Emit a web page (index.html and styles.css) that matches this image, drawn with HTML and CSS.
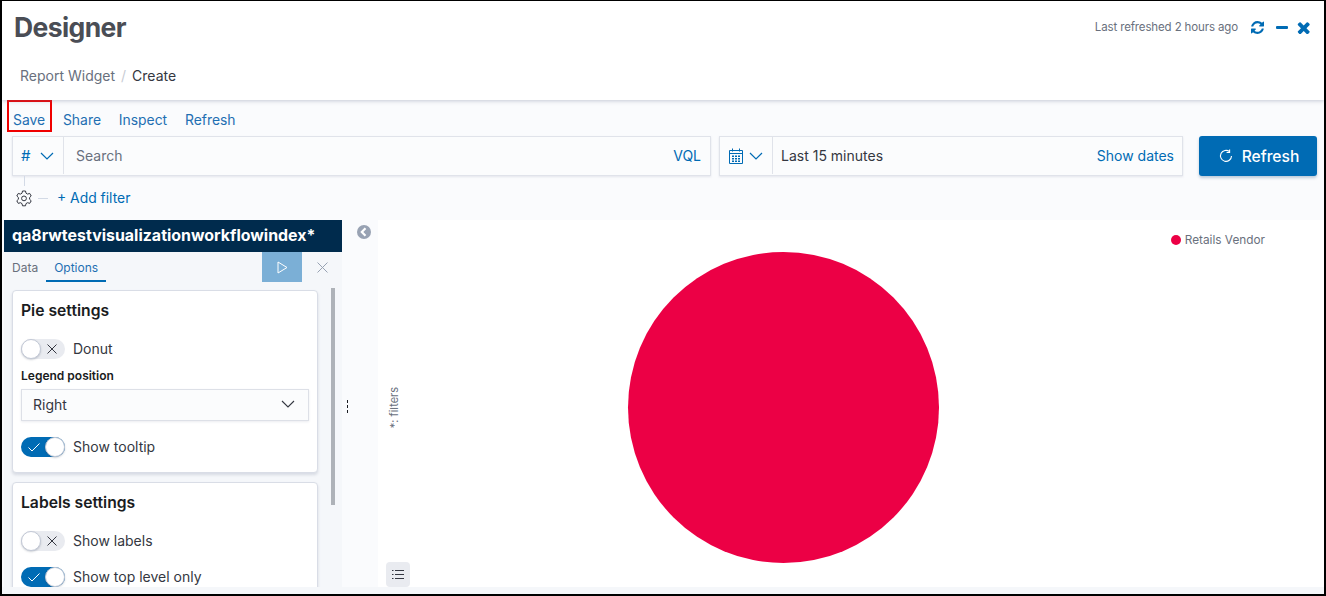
FILE: index.html
```html
<!DOCTYPE html>
<html lang="en">
<head>
  <meta charset="UTF-8">
  <title>Designer</title>
  <link rel="stylesheet" href="styles.css">
</head>
<body>
<div class="frame">

  <header class="top">
    <div class="title-row">
      <h1>Designer</h1>
      <div class="status">
        <span>Last refreshed 2 hours ago</span>
        <svg class="sync" width="13" height="13" viewBox="128 128 1536 1536"><path d="M1639 1056q0 5-1 7-64 268-268 434.500t-478 166.500q-146 0-282.500-55t-243.500-157l-129 129q-19 19-45 19t-45-19-19-45v-448q0-26 19-45t45-19h448q26 0 45 19t19 45-19 45l-137 137q71 66 161 102t187 36q134 0 250-65t186-179q11-17 53-117 8-23 30-23h192q13 0 22.500 9.500t9.500 22.500zm25-800v448q0 26-19 45t-45 19h-448q-26 0-45-19t-19-45 19-45l138-138q-148-137-349-137-134 0-250 65t-186 179q-11 17-53 117-8 23-30 23h-199q-13 0-22.500-9.500t-9.500-22.500v-7q65-268 270-434.500t480-166.500q146 0 284 55.500t245 156.500l130-129q19-19 45-19t45 19 19 45z" fill="#006bb4"/></svg>
        <span class="minus"></span>
        <svg width="13" height="13" viewBox="250 245 1250 1290"><path d="M1490 1322q0 40-28 68l-136 136q-28 28-68 28t-68-28l-294-294-294 294q-28 28-68 28t-68-28l-136-136q-28-28-28-68t28-68l294-294-294-294q-28-28-28-68t28-68l136-136q28-28 68-28t68 28l294 294 294-294q28-28 68-28t68 28l136 136q28 28 28 68t-28 68l-294 294 294 294q28 28 28 68z" fill="#006bb4"/></svg>
      </div>
    </div>
    <div class="crumbs"><span>Report Widget</span><i>/</i><b>Create</b></div>
  </header>

  <section class="toolbar">
    <nav class="links">
      <a class="save">Save</a><a>Share</a><a>Inspect</a><a>Refresh</a>
    </nav>
    <div class="query-row">
      <div class="search box">
        <div class="prepend"><span class="hash">#</span><svg width="14" height="8" viewBox="0 0 14 8"><path d="M1 1l6 6 6-6" stroke="#006bb4" fill="none" stroke-width="1.2"/></svg></div>
        <span class="placeholder">Search</span>
        <a class="vql">VQL</a>
      </div>
      <div class="dates box">
        <div class="prepend cal">
          <svg width="14" height="16" viewBox="0 0 14 16"><path d="M.5 2.500h13v13H.5zM.5 5.500h13M3.500 .5v3M10.500 .5v3" stroke="#006bb4" fill="none"/><path d="M3 7.500h2V9H3zM6 7.500h2V9H6zM9 7.500h2V9H9zM3 10h2v1.500H3zM6 10h2v1.500H6zM9 10h2v1.500H9zM3 12.500h2V14H3zM6 12.500h2V14H6zM9 12.500h2V14H9z" fill="#006bb4"/></svg>
          <svg width="14" height="8" viewBox="0 0 14 8"><path d="M1 1l6 6 6-6" stroke="#006bb4" fill="none" stroke-width="1.2"/></svg>
        </div>
        <span class="range">Last 15 minutes</span>
        <a class="show">Show dates</a>
      </div>
      <button class="refresh">
        <svg width="14" height="14" viewBox="0 0 14 14"><path d="M10.500 2.600A5.500 5.500 0 1 0 12.500 7" stroke="#fff" fill="none" stroke-width="1.100"/><path d="M10.600 .5v3h-3" stroke="#fff" fill="none" stroke-width="1.100"/></svg>
        Refresh
      </button>
    </div>
    <div class="filter-row">
      <svg width="16" height="17" viewBox="0 0 16 17"><path d="M6.500 1h3l.5 2.200 1.600.9 2.100-.7 1.500 2.600-1.600 1.500v1.800l1.600 1.500-1.500 2.600-2.100-.7-1.600.9-.5 2.200h-3L6 13.600l-1.600-.9-2.100.7L.8 10.800l1.600-1.500V7.500L.8 6l1.500-2.600 2.100.7L6 3.200z" stroke="#343741" stroke-linejoin="round" fill="none"/><circle cx="8" cy="8.400" r="2.400" stroke="#343741" fill="none"/></svg>
      <span class="dash"></span>
      <a>+ Add filter</a>
    </div>
  </section>

  <main class="workspace">
    <aside class="panel">
      <h2 class="index-name">qa8rwtestvisualizationworkflowindex*</h2>
      <div class="tabs">
        <a>Data</a>
        <a class="active">Options</a>
        <button class="run"><svg width="11" height="13" viewBox="0 0 11 13"><path d="M1 1l9 5.500-9 5.500z" stroke="#fff" fill="none"/></svg></button>
        <svg class="discard" width="11" height="11" viewBox="0 0 11 11"><path d="M.5 .5l10 10M10.500 .5l-10 10" stroke="#98a2b3" fill="none"/></svg>
      </div>
      <div class="options">
        <div class="cards">
          <section class="card">
            <h3>Pie settings</h3>
            <div class="switch-row off">
              <span class="switch"><svg width="10" height="10" viewBox="0 0 10 10"><path d="M.5 .5l9 9M9.500 .5l-9 9" stroke="#343741" fill="none"/></svg><span class="knob"></span></span>
              Donut
            </div>
            <label>Legend position</label>
            <div class="select">Right<svg width="14" height="8" viewBox="0 0 14 8"><path d="M1 1l6 6 6-6" stroke="#343741" fill="none" stroke-width="1.100"/></svg></div>
            <div class="switch-row on">
              <span class="switch"><svg width="12" height="9" viewBox="0 0 12 9"><path d="M.5 4.500l3.500 3.500 7.500-7.500" stroke="#fff" fill="none"/></svg><span class="knob"></span></span>
              Show tooltip
            </div>
          </section>
          <section class="card">
            <h3>Labels settings</h3>
            <div class="switch-row off">
              <span class="switch"><svg width="10" height="10" viewBox="0 0 10 10"><path d="M.5 .5l9 9M9.500 .5l-9 9" stroke="#343741" fill="none"/></svg><span class="knob"></span></span>
              Show labels
            </div>
            <div class="switch-row on second">
              <span class="switch"><svg width="12" height="9" viewBox="0 0 12 9"><path d="M.5 4.500l3.500 3.500 7.500-7.500" stroke="#fff" fill="none"/></svg><span class="knob"></span></span>
              Show top level only
            </div>
          </section>
        </div>
        <div class="scrollbar"></div>
      </div>
    </aside>

    <div class="gutter">
      <svg class="collapse" width="14" height="14" viewBox="0 0 14 14"><circle cx="7" cy="7" r="7" fill="#98a2b3"/><path d="M8.500 3.200L4.800 7l3.700 3.800" stroke="#fff" stroke-width="2.200" fill="none"/></svg>
      <span class="dots"></span>
    </div>

    <div class="chart">
      <span class="filters-tag">*: filters</span>
      <div class="pie"></div>
      <div class="legend"><span class="dot"></span>Retails Vendor</div>
      <button class="legend-toggle"><svg width="12" height="11" viewBox="0 0 12 11"><path d="M3 1.500h9M3 5.500h9M3 9.500h9" stroke="#343741"/><path d="M0 1h1.500v1H0zM0 5h1.500v1H0zM0 9h1.500v1H0z" fill="#343741"/></svg></button>
    </div>
  </main>

</div>
</body>
</html>
```

FILE: styles.css
```css
* {
  box-sizing: border-box;
}

html, body {
  margin: 0;
  height: 100%;
  overflow: hidden;
}

body {
  font-family: Inter, sans-serif;
  font-size: 14px;
  color: #343741;
  background: #fff;
}

a {
  color: #006bb4;
}

.frame {
  height: 596px;
  border: 2px solid #000;
  border-top-width: 1px;
  display: flex;
  flex-direction: column;
  overflow: hidden;
}

/* header */
.top {
  height: 99px;
  flex: none;
  position: relative;
  z-index: 1;
  box-shadow: 0 1px 4px rgba(100, 110, 140, 0.35);
  background: #fff;
}

.title-row {
  display: flex;
  justify-content: space-between;
  align-items: flex-start;
  padding: 10px 14px 0 12px;
}

h1 {
  margin: 0;
  font-size: 26.5px;
  letter-spacing: -0.6px;
  line-height: 33px;
  font-weight: 700;
  color: #4a4d55;
}

.status {
  display: flex;
  align-items: center;
  font-size: 11.5px;
  letter-spacing: -0.13px;
  color: #69707d;
  margin-top: 6px;
  height: 20px;
}

.sync {
  margin-left: 13px;
}

.minus {
  width: 12px;
  height: 3px;
  border-radius: 1px;
  background: #006bb4;
  margin: 0 9px 0 12px;
}

.crumbs {
  display: flex;
  align-items: center;
  padding: 22px 0 0 18px;
  font-size: 14px;
  line-height: 20px;
  color: #69707d;
}

.crumbs i {
  font-style: normal;
  color: #c8ccd4;
  margin: 0 6px;
}

.crumbs b {
  font-weight: 400;
  color: #343741;
}

/* toolbar */
.toolbar {
  flex: none;
  height: 120px;
  background: #fafbfd;
  position: relative;
}

.links {
  display: flex;
  height: 31px;
  align-items: flex-end;
  padding: 0 0 0 11px;
  font-size: 13.9px;
}

.links a {
  margin-right: 17.8px;
  line-height: 21px;
  color: #1f6fb2;
}

.links .save {
  position: relative;
}

.links .save::after {
  content: "";
  position: absolute;
  left: -6px;
  right: -7px;
  top: -10px;
  bottom: -1px;
  border: 2px solid #f00000;
}

.query-row {
  display: flex;
  margin: 5px 0 0 10px;
  height: 40px;
}

.box {
  display: flex;
  align-items: center;
  flex: none;
  height: 40px;
  padding-bottom: 1px;
  background: #fbfcfd;
  border: 1px solid #e0e3ea;
  box-shadow: 0 1px 2px rgba(100, 110, 140, 0.15);
}

.prepend {
  display: flex;
  align-items: center;
  height: 100%;
  border-right: 1px solid #e0e3ea;
  flex: none;
}

.search {
  width: 699px;
}

.search .prepend {
  width: 51px;
  padding-left: 8px;
  gap: 9px;
}

.hash {
  font-size: 15px;
  color: #006bb4;
}

.placeholder {
  flex: 1;
  padding-left: 12px;
  color: #69707d;
}

.vql {
  padding-right: 9px;
}

.dates {
  width: 464px;
  margin-left: 8px;
}

.cal {
  width: 53px;
  padding-left: 9px;
  gap: 6px;
}

.range {
  flex: 1;
  padding-left: 8px;
}

.show {
  padding-right: 8px;
}

.refresh {
  width: 118px;
  height: 40px;
  flex: none;
  margin-left: 16px;
  padding: 0 0 0 2px;
  border: 0;
  border-radius: 3px;
  background: #006bb4;
  color: #fff;
  font: 500 15.6px Inter, sans-serif;
  display: flex;
  align-items: center;
  justify-content: center;
  gap: 9px;
  box-shadow: 0 2px 3px rgba(0, 60, 110, 0.25);
}

.filter-row {
  display: flex;
  align-items: center;
  height: 22px;
  margin: 11px 0 0 14px;
  position: relative;
  font-size: 13.9px;
}

.filter-row a {
  padding-bottom: 1px;
}

.filter-row::before {
  content: "";
  position: absolute;
  left: 8px;
  top: -11px;
  height: 10px;
  border-left: 1px solid #d3dae6;
}

.dash {
  width: 10px;
  border-top: 1px solid #d3dae6;
  margin: 0 9px 0 6px;
}

/* workspace */
.workspace {
  flex: 1;
  min-height: 0;
  display: flex;
  background: #fafbfd;
  border-bottom: 7px solid #f5f7fa;
}

.panel {
  width: 338px;
  margin-left: 2px;
  flex: none;
  background: #f5f7fa;
  display: flex;
  flex-direction: column;
  min-height: 0;
}

.index-name {
  margin: 0;
  height: 32px;
  padding-left: 8px;
  background: #002b4d;
  color: #fff;
  font-size: 15.95px;
  line-height: 32px;
  font-weight: 700;
  white-space: nowrap;
}

.tabs {
  display: flex;
  height: 30px;
  flex: none;
  font-size: 12px;
  position: relative;
}

.tabs a {
  color: #69707d;
  line-height: 31px;
  padding-left: 8px;
}

.tabs .active {
  color: #1f6fb2;
  margin-left: 8px;
  width: 60px;
  padding-left: 8px;
  border-bottom: 2px solid #006bb4;
}

.run {
  width: 40px;
  height: 30px;
  margin-left: 156px;
  border: 0;
  padding: 0;
  background: #7bafd6;
  display: flex;
  align-items: center;
  justify-content: center;
}

.discard {
  margin: 10px 0 0 15px;
}

.options {
  flex: 1;
  min-height: 0;
  display: flex;
  overflow: hidden;
  padding: 8px 0 0 8px;
}

.cards {
  width: 306px;
  flex: none;
}

.card {
  background: #fff;
  border: 1px solid #d9dde6;
  border-radius: 4px;
  box-shadow: 0 2px 3px rgba(100, 110, 140, 0.2);
  padding: 7px 8px 15px;
  margin-bottom: 9px;
}

h3 {
  margin: 0 0 16px;
  padding-top: 1px;
  font-size: 15.7px;
  line-height: 24px;
  font-weight: 600;
  color: #1a1c21;
}

.switch-row {
  display: flex;
  align-items: flex-start;
  height: 20px;
  line-height: 20px;
  gap: 8px;
}

.switch-row.second {
  margin-top: 16px;
}

.switch {
  width: 44px;
  height: 20px;
  border-radius: 10px;
  position: relative;
  display: flex;
  align-items: center;
  flex: none;
}

.off .switch {
  background: #e9ebf0;
  justify-content: flex-end;
  padding-right: 8px;
}

.on .switch {
  background: #006bb4;
  padding-left: 7px;
}

.knob {
  position: absolute;
  top: 0;
  width: 20px;
  height: 20px;
  border-radius: 50%;
  background: #fff;
  border: 1px solid #c3c9d6;
  box-shadow: 0 1px 2px rgba(60, 70, 90, 0.25);
}

.off .knob {
  left: 0;
}

.on .knob {
  right: 0;
}

label {
  display: block;
  margin: 9px 0 6px;
  font-size: 12px;
  line-height: 15px;
  font-weight: 600;
  color: #1a1c21;
}

.select {
  display: flex;
  align-items: center;
  justify-content: space-between;
  height: 32px;
  padding: 0 13px 2px 11px;
  background: #fbfcfd;
  border: 1px solid #dde0e7;
  box-shadow: 0 1px 2px rgba(100, 110, 140, 0.12);
  margin-bottom: 16px;
}

.scrollbar {
  width: 4px;
  height: 217px;
  background: #aeb2b8;
  margin: -2px 0 0 13px;
  flex: none;
}

.gutter {
  width: 36px;
  flex: none;
  position: relative;
}

.collapse {
  position: absolute;
  left: 15px;
  top: 5px;
}

.dots {
  position: absolute;
  left: 5px;
  top: 180px;
  height: 13px;
  border-left: 1px dashed #1a1c21;
}

.chart {
  flex: 1;
  background: #fff;
  position: relative;
  display: flex;
  justify-content: center;
  padding-top: 32px;
}

.pie {
  width: 311px;
  height: 311px;
  border-radius: 50%;
  background: #ec0045;
  margin-right: 135px;
}

.legend {
  position: absolute;
  right: 59px;
  top: 12px;
  display: flex;
  align-items: center;
  gap: 4px;
  font-size: 11.8px;
  line-height: 16px;
  color: #69707d;
}

.dot {
  width: 10px;
  height: 10px;
  border-radius: 50%;
  background: #ec0045;
}

.filters-tag {
  position: absolute;
  left: 9px;
  top: 167px;
  font-size: 11px;
  color: #69707d;
  writing-mode: vertical-rl;
  transform: rotate(180deg);
}

.legend-toggle {
  position: absolute;
  left: 8px;
  bottom: 0;
  width: 24px;
  height: 25px;
  border: 0;
  border-radius: 4px;
  background: #e9ebf0;
  padding: 0;
  display: flex;
  align-items: center;
  justify-content: center;
}
```
